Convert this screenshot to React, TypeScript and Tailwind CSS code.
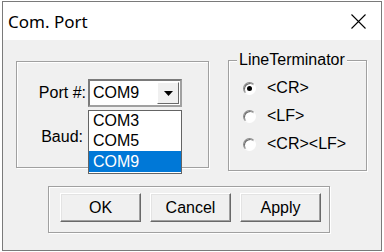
import React from 'react';

const etched = 'border border-[#a0a0a0] shadow-[inset_1px_1px_0_#ffffff,1px_1px_0_#ffffff]';

const Combo: React.FC<{ value?: string; children?: React.ReactNode }> = ({ value, children }) => (
  <div className="relative">
    <div className="w-[94px] h-[28px] border-2 border-[#a0a0a0] border-t-[#7a7a7a] border-l-[#7a7a7a] bg-white flex items-center">
      <span className="pl-[3px] flex-1 text-[16px] leading-none">{value}</span>
      <div className="w-[22px] h-[22px] mr-[1px] bg-[#f0f0f0] border border-t-white border-l-white border-r-[#696969] border-b-[#696969] flex items-center justify-center">
        <svg width="9" height="5" viewBox="0 0 9 5">
          <path d="M0 0h9L4.5 5z" fill="#000" />
        </svg>
      </div>
    </div>
    {children}
  </div>
);

export default function App() {
  return (
    <div className="w-[384px] h-[252px] bg-white pl-[2px] pt-[1px] text-black" style={{ fontFamily: '"Liberation Sans", Arial, sans-serif' }}>
      <div className="w-[380px] h-[250px] border border-[#7a7a7a] flex flex-col">
        {/* Title bar */}
        <div className="h-[38px] bg-white flex items-center justify-between pl-[5px]">
          <span className="text-[17px] leading-none" style={{ fontFamily: '"Noto Sans", "Open Sans", sans-serif' }}>Com. Port</span>
          <div className="w-[46px] h-full flex items-center justify-center">
            <svg width="15" height="15" viewBox="0 0 15 15">
              <path d="M0.5 0.5L14.5 14.5M14.5 0.5L0.5 14.5" stroke="#000" strokeWidth="1.1" />
            </svg>
          </div>
        </div>

        {/* Body */}
        <div className="flex-1 bg-[#f0f0f0] pt-[20px] pl-[13px]">
          <div className="flex items-start">
            {/* Port group */}
            <div className={`mt-[1px] w-[193px] h-[107px] ${etched} pt-[17px]`}>
              <div className="flex items-center">
                <span className="w-[69px] text-right text-[16px] leading-none">Port #:</span>
                <div className="ml-[2px]">
                  <Combo value="COM9">
                    <div className="absolute top-[31px] left-0 w-[94px] h-[64px] border border-[#646464] bg-white z-10 flex flex-col text-[16px] leading-none">
                      <div className="h-[20px] flex items-center pl-[4px]">COM3</div>
                      <div className="h-[20px] flex items-center pl-[4px]">COM5</div>
                      <div className="h-[21px] flex items-center pl-[4px] bg-[#0078d7] text-white">COM9</div>
                    </div>
                  </Combo>
                </div>
              </div>
              <div className="flex items-center mt-[16px]">
                <span className="w-[66px] text-right text-[16px] leading-none">Baud:</span>
                <div className="ml-[5px]">
                  <Combo value="" />
                </div>
              </div>
            </div>

            {/* LineTerminator group */}
            <div className={`relative ml-[19px] w-[139px] h-[111px] ${etched} pt-[13px] pl-[14px]`}>
              <span className="absolute -top-[10px] left-[8px] px-[2px] h-[18px] flex items-center bg-[#f0f0f0] text-[16px] leading-none">LineTerminator</span>
              {['<CR>', '<LF>', '<CR><LF>'].map((label, i) => (
                <div key={label} className="h-[28px] flex items-center">
                  <div className="w-[13px] h-[13px] rounded-full border border-[#8a8a8a] border-r-white border-b-white bg-white shadow-[inset_1px_1px_0_#6e6e6e] flex items-center justify-center">
                    {i === 0 && <div className="w-[5px] h-[5px] rounded-full bg-black" />}
                  </div>
                  <span className="ml-[11px] text-[16px] leading-none">{label}</span>
                </div>
              ))}
            </div>
          </div>

          {/* Buttons group */}
          <div className={`mt-[15px] ml-[32px] w-[282px] h-[47px] ${etched} pl-[11px] pt-[6px] flex gap-[9px]`}>
            {['OK', 'Cancel', 'Apply'].map((label) => (
              <button
                key={label}
                className="w-[81px] h-[29px] bg-[#f0f0f0] border border-t-white border-l-white border-r-[#696969] border-b-[#696969] shadow-[inset_-1px_-1px_0_#a0a0a0,inset_1px_1px_0_#e3e3e3] text-[16px] leading-none flex items-center justify-center"
              >
                {label}
              </button>
            ))}
          </div>
        </div>
      </div>
    </div>
  );
}
